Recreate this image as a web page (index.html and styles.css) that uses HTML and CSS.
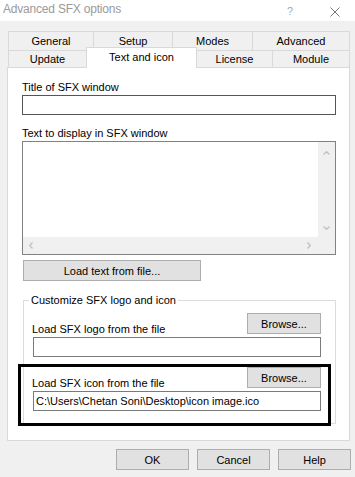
FILE: index.html
```html
<!DOCTYPE html>
<html lang="en">
<head>
    <meta charset="UTF-8">
    <meta name="viewport" content="width=device-width, initial-scale=1.0">
    <title>Advanced SFX options</title>
    <link rel="stylesheet" href="styles.css">
</head>
<body>
    <div class="titlebar">
        <span class="title">Advanced SFX options</span>
        <span class="help">?</span>
        <svg class="close" width="10" height="10" viewBox="0 0 10 10">
            <path d="M0.5 0.5 L9.5 9.5 M9.5 0.5 L0.5 9.5" stroke="#777" stroke-width="1" fill="none"/>
        </svg>
    </div>

    <!-- tabs: back row, then front row with the selected tab -->
    <div class="tab-row back">
        <div class="tab t-general">General</div>
        <div class="tab t-setup">Setup</div>
        <div class="tab t-modes">Modes</div>
        <div class="tab t-advanced">Advanced</div>
    </div>
    <div class="tab-row front">
        <div class="tab t-update">Update</div>
        <div class="tab t-text active">Text and icon</div>
        <div class="tab t-license">License</div>
        <div class="tab t-module">Module</div>
    </div>

    <div class="panel">
        <div class="field-label">Title of SFX window</div>
        <div class="edit edit-title"></div>

        <div class="field-label gap">Text to display in SFX window</div>
        <div class="memo">
            <div class="memo-text"></div>
            <div class="vscroll">
                <svg width="7" height="4" viewBox="0 0 7 4"><polyline points="0.5,3.5 3.5,0.7 6.5,3.5" class="arrow"/></svg>
                <svg width="7" height="4" viewBox="0 0 7 4"><polyline points="0.5,0.5 3.5,3.3 6.5,0.5" class="arrow"/></svg>
            </div>
            <div class="hscroll">
                <svg width="4" height="7" viewBox="0 0 4 7"><polyline points="3.5,0.5 0.7,3.5 3.5,6.5" class="arrow"/></svg>
                <svg width="4" height="7" viewBox="0 0 4 7"><polyline points="0.5,0.5 3.3,3.5 0.5,6.5" class="arrow"/></svg>
            </div>
            <div class="corner"></div>
        </div>
        <button class="btn btn-load">Load text from file...</button>

        <fieldset class="group">
            <legend>Customize SFX logo and icon</legend>
            <div class="file-row">
                <span class="row-label">Load SFX logo from the file</span>
                <button class="btn btn-browse">Browse...</button>
            </div>
            <div class="edit edit-file"></div>
            <div class="file-row second">
                <span class="row-label">Load SFX icon from the file</span>
                <button class="btn btn-browse">Browse...</button>
            </div>
            <div class="edit edit-file">C:\Users\Chetan Soni\Desktop\icon image.ico</div>
        </fieldset>

        <div class="highlight"></div>
    </div>

    <div class="dialog-buttons">
        <button class="btn btn-dlg">OK</button>
        <button class="btn btn-dlg">Cancel</button>
        <button class="btn btn-dlg">Help</button>
    </div>
</body>
</html>
```

FILE: styles.css
```css
* {
    box-sizing: border-box;
}
body {
    margin: 0;
    width: 355px;
    height: 477px;
    background-color: #f0f0f0;
    font-family: "Liberation Sans", Arial, sans-serif;
    font-size: 11px;
    color: #000;
    overflow: hidden;
}
.titlebar {
    display: flex;
    align-items: flex-start;
    height: 21px;
    background-color: #fff;
}
.title {
    flex: 1;
    padding: 2px 0 0 3px;
    line-height: 14px;
    font-size: 12px;
    letter-spacing: -0.2px;
    color: #9a9a9a;
}
.help {
    width: 6px;
    margin: 6px 37px 0 0;
    font-size: 11px;
    line-height: 11px;
    color: #aaa;
}
.close {
    margin: 7px 15px 0 0;
}

/* tabs */
.tab-row {
    display: flex;
    padding-left: 8px;
}
.tab-row.back {
    height: 19px;
    margin-top: 10px;
}
.tab-row.front {
    height: 17px;
}
.tab {
    display: flex;
    align-items: center;
    justify-content: center;
    height: 100%;
    margin-left: -1px;
    border: 1px solid #d9d9d9;
    border-bottom: none;
    background-color: #f0f0f0;
    line-height: 13px;
}
.tab:first-child {
    margin-left: 0;
}
.tab.active {
    position: relative;
    z-index: 2;
    height: 21px;
    margin-top: -3px;
    background-color: #fff;
    padding-bottom: 1px;
}
.t-general { width: 86px; }
.t-setup { width: 80px; }
.t-modes { width: 81px; }
.t-advanced { width: 98px; }
.t-update { width: 79px; }
.t-text { width: 111px; }
.t-license { width: 77px; }
.t-module { width: 78px; }

/* panel */
.panel {
    position: relative;
    width: 343px;
    height: 374px;
    margin-left: 7px;
    padding: 13px 13px 0 14px;
    background-color: #fff;
    border: 1px solid #d9d9d9;
}
.field-label {
    line-height: 13px;
}
.field-label.gap {
    margin-top: 12px;
}
.edit {
    height: 20px;
    margin-top: 1px;
    padding: 0 2px;
    border: 1px solid #7a7a7a;
    background-color: #fff;
    line-height: 18px;
    white-space: nowrap;
}
.edit-title {
    border-color: #555;
}
.memo {
    display: grid;
    grid-template-columns: 1fr 17px;
    grid-template-rows: 1fr 17px;
    height: 114px;
    margin-top: 1px;
    border: 1px solid #828282;
}
.vscroll, .hscroll, .corner {
    background-color: #f0f0f0;
}
.vscroll {
    display: flex;
    flex-direction: column;
    justify-content: space-between;
    align-items: center;
    padding: 9px 1px 7px 0;
}
.hscroll {
    display: flex;
    justify-content: space-between;
    align-items: center;
    padding: 0 7px 0 6px;
}
.arrow {
    fill: none;
    stroke: #c2c2c2;
    stroke-width: 1.4;
}
.btn {
    display: block;
    height: 21px;
    padding: 0;
    border: 1px solid #adadad;
    background-color: #e1e1e1;
    font-family: inherit;
    font-size: 11px;
    color: #000;
}
.btn-load {
    width: 178px;
    margin: 5px 0 0 1px;
}

/* group box */
.group {
    width: 313px;
    margin: 12px 0 0 1px;
    padding: 0 14px 12px 8px;
    border: 1px solid #dcdcdc;
    min-width: 0;
}
.group legend {
    margin-left: -3px;
    padding: 0 2px;
    line-height: 14px;
}
.file-row {
    display: flex;
    justify-content: space-between;
    align-items: flex-end;
    height: 23px;
    margin-top: 6px;
}
.file-row.second {
    margin-top: 10px;
}
.row-label {
    line-height: 13px;
}
.btn-browse {
    width: 74px;
    margin-bottom: 2px;
}
.edit-file {
    margin-left: 1px;
}
.highlight {
    position: absolute;
    left: 10px;
    top: 296px;
    width: 313px;
    height: 62px;
    border: 3px solid #000;
}

/* dialog buttons */
.dialog-buttons {
    display: flex;
    justify-content: flex-end;
    gap: 8px;
    margin-top: 8px;
    padding-right: 4px;
}
.btn-dlg {
    width: 73px;
}
```
